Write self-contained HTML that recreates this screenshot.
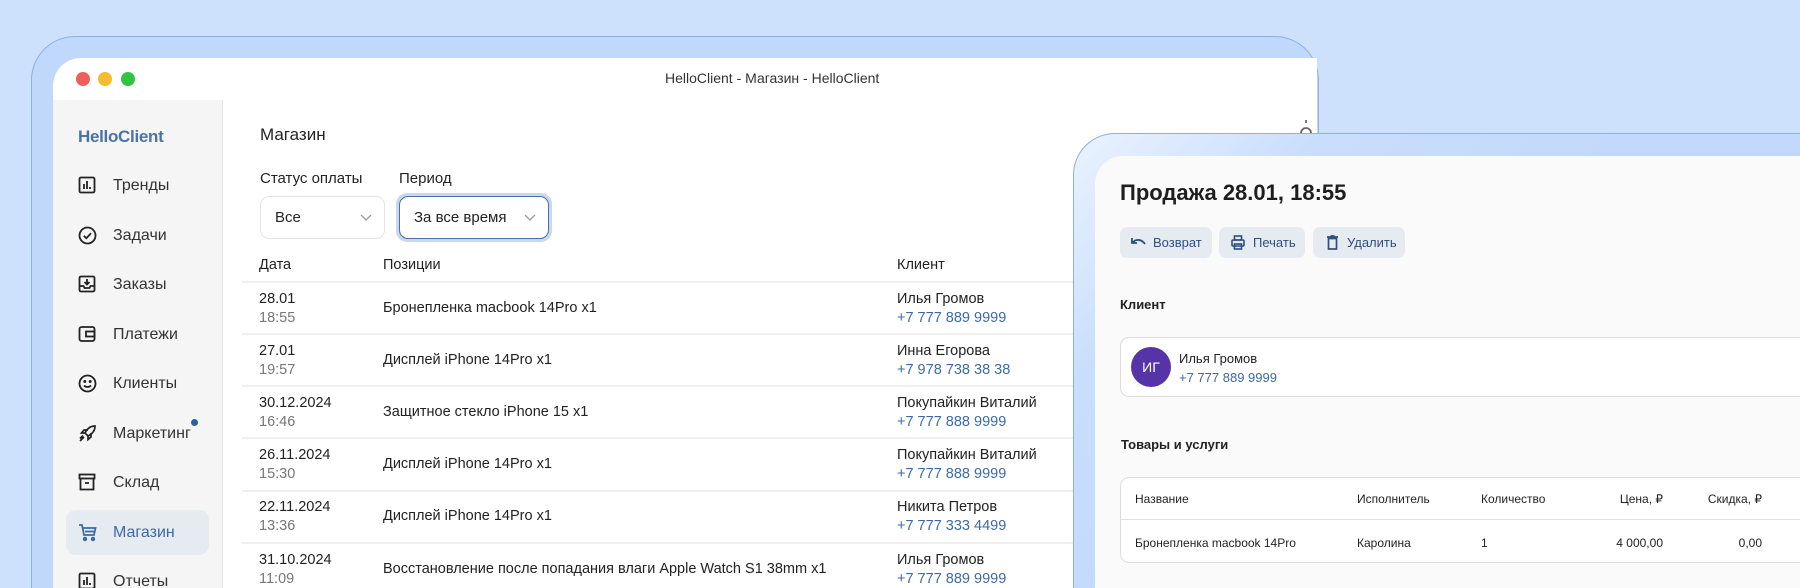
<!DOCTYPE html>
<html><head><meta charset="utf-8"><style>
*{margin:0;padding:0;box-sizing:border-box}
html,body{width:1800px;height:588px;overflow:hidden}
body{background:#cde1fd;font-family:"Liberation Sans","Noto Sans CJK SC",sans-serif;color:#222}
#root{position:relative;width:1800px;height:588px;overflow:hidden}
.abs{position:absolute}
.frame{left:31px;top:36px;width:1288px;height:700px;border:1.5px solid #8fb0e2;border-radius:44px;background:#c0d8fb}
.win{left:53px;top:58px;width:1264px;height:700px;background:#fff;border-radius:28px 0 0 0;overflow:hidden}
.dot{width:14px;height:14px;border-radius:50%;top:72px}
.side{left:53px;top:100px;width:170px;height:600px;background:#f5f5f5;border-right:1px solid #e6e6e6}
.nav{left:78px;font-size:16px;color:#333;height:20px;line-height:20px}
.nav svg{position:absolute;left:0;top:0}
.nav span{position:absolute;left:35px;top:0;white-space:nowrap}
.t{font-size:14.5px;white-space:nowrap}
.sel{border:1px solid #e4e4e4;border-radius:9px;background:#fff;height:43px;top:196px;font-size:15px;line-height:41px;padding-left:14px}
.line{height:2px;background:#efefef;left:242px;width:840px}
.ph{color:#3d6aa6}
.pframe{left:1073px;top:133px;width:800px;height:600px;border:1.5px solid #8fb0e2;border-radius:42px;background:linear-gradient(135deg,#eaf3ff 0%,#c9defc 18%,#c2d9fb 40%)}
.pin{left:1095px;top:156px;width:800px;height:600px;background:#fafafa;border-radius:28px 0 0 0}
.btn{top:227px;height:31px;background:#e6ebf2;border-radius:7px;font-size:13px;color:#2d4f7e;line-height:31px}
.sm{font-size:12px;white-space:nowrap}
</style></head><body><div id="root">
<div class="abs frame"></div>
<div class="abs win"></div>
<div class="abs dot" style="left:76px;background:#ee5f57"></div>
<div class="abs dot" style="left:98px;background:#f6bb2f"></div>
<div class="abs dot" style="left:121px;background:#2ec640"></div>
<div class="abs" style="left:665px;top:70px;font-size:14px;color:#333">HelloClient - Магазин - HelloClient</div>
<div class="abs side"></div>
<div class="abs" style="left:78px;top:127px;font-size:17px;font-weight:bold;color:#4b72a8;letter-spacing:-0.3px">HelloClient</div>

<div class="abs nav" style="top:176px"><svg width="18" height="18" viewBox="0 0 18 18" fill="none" stroke="#222" stroke-width="1.8"><rect x="1.5" y="1.5" width="15" height="15" rx="1.5"/><path d="M6 13V8M9 13V5M12 13v-2"/></svg><span>Тренды</span></div>
<div class="abs nav" style="top:226px"><svg width="19" height="19" viewBox="0 0 19 19" fill="none" stroke="#222" stroke-width="1.8"><circle cx="9.5" cy="9.5" r="8"/><path d="M5.8 9.7l2.5 2.5 4.8-5"/></svg><span>Задачи</span></div>
<div class="abs nav" style="top:275px"><svg width="18" height="18" viewBox="0 0 18 18" fill="none" stroke="#222" stroke-width="1.8"><rect x="1.5" y="1.5" width="15" height="15" rx="1.5"/><path d="M1.5 11h4l1 2h5l1-2h4M9 4v5M6.5 7L9 9.5 11.5 7"/></svg><span>Заказы</span></div>
<div class="abs nav" style="top:325px"><svg width="18" height="18" viewBox="0 0 18 18" fill="none" stroke="#222" stroke-width="1.8"><rect x="1.5" y="2" width="15" height="14" rx="2"/><rect x="8" y="6.5" width="8.5" height="5"/></svg><span>Платежи</span></div>
<div class="abs nav" style="top:374px"><svg width="19" height="19" viewBox="0 0 19 19" fill="none" stroke="#222" stroke-width="1.8"><circle cx="9.5" cy="9.5" r="8"/><path d="M6 11.5c1.8 2 5.2 2 7 0"/><circle cx="6.8" cy="7.5" r=".6" fill="#222"/><circle cx="12.2" cy="7.5" r=".6" fill="#222"/></svg><span>Клиенты</span></div>
<div class="abs nav" style="top:424px"><svg width="19" height="19" viewBox="0 0 19 19" fill="none" stroke="#222" stroke-width="1.7"><path d="M17 2c-5 0-8 3-10 7l3 3c4-2 7-5 7-10zM7 9H3.5L6 6h4M10 12v3.5l3-2.5V9M6 13l-4 4M5 11.5L2 14.5"/></svg><span>Маркетинг</span></div>
<div class="abs" style="left:191px;top:419px;width:7px;height:7px;border-radius:50%;background:#2d5fa0"></div>
<div class="abs nav" style="top:473px"><svg width="18" height="18" viewBox="0 0 18 18" fill="none" stroke="#222" stroke-width="1.8"><rect x="1.5" y="1.5" width="15" height="4"/><path d="M2.5 5.5v11h13v-11M7 10h4"/></svg><span>Склад</span></div>
<div class="abs" style="left:66px;top:510px;width:143px;height:45px;border-radius:10px;background:#e6ebf2"></div>
<div class="abs nav" style="top:523px;color:#3d6aa6"><svg width="19" height="19" viewBox="0 0 19 19" fill="none" stroke="#3d6aa6" stroke-width="1.8"><path d="M1 2h3l2 10h10l1.5-7H5M7 8.5h9"/><circle cx="7" cy="16" r="1.3" fill="#3d6aa6"/><circle cx="15" cy="16" r="1.3" fill="#3d6aa6"/></svg><span>Магазин</span></div>
<div class="abs nav" style="top:572px"><svg width="18" height="18" viewBox="0 0 18 18" fill="none" stroke="#222" stroke-width="1.8"><rect x="1.5" y="1.5" width="15" height="15" rx="1.5"/><path d="M6 13V8M9 13V5M12 13v-2"/></svg><span>Отчеты</span></div>

<div class="abs" style="left:260px;top:125px;font-size:17px;color:#222">Магазин</div>
<div class="abs t" style="left:260px;top:170px;font-size:15px">Статус оплаты</div>
<div class="abs t" style="left:399px;top:170px;font-size:15px">Период</div>
<div class="abs sel" style="left:260px;width:125px">Все<svg class="abs" style="right:12px;top:17px" width="12" height="8" viewBox="0 0 12 8" fill="none" stroke="#999" stroke-width="1.3"><path d="M1 1l5 5 5-5"/></svg></div>
<div class="abs" style="left:396px;top:193px;width:156px;height:49px;border-radius:11px;background:#c9d8ea"></div>
<div class="abs sel" style="left:399px;width:150px;border:1.5px solid #4a6fa5">За все время<svg class="abs" style="right:12px;top:17px" width="12" height="8" viewBox="0 0 12 8" fill="none" stroke="#999" stroke-width="1.3"><path d="M1 1l5 5 5-5"/></svg></div>

<div class="abs t" style="left:259px;top:257px">Дата</div>
<div class="abs t" style="left:383px;top:257px">Позиции</div>
<div class="abs t" style="left:897px;top:257px">Клиент</div>
<div class="abs line" style="top:281px"></div>
<div class="abs line" style="top:333px"></div>
<div class="abs line" style="top:385px"></div>
<div class="abs line" style="top:437px"></div>
<div class="abs line" style="top:490px"></div>
<div class="abs line" style="top:542px"></div>

<div class="abs t" style="left:259px;top:290px;line-height:19px">28.01<br><span style="color:#777">18:55</span></div>
<div class="abs t" style="left:383px;top:300px">Бронепленка macbook 14Pro x1</div>
<div class="abs t" style="left:897px;top:290px;line-height:19px">Илья Громов<br><span class="ph">+7 777 889 9999</span></div>

<div class="abs t" style="left:259px;top:342px;line-height:19px">27.01<br><span style="color:#777">19:57</span></div>
<div class="abs t" style="left:383px;top:352px">Дисплей iPhone 14Pro x1</div>
<div class="abs t" style="left:897px;top:342px;line-height:19px">Инна Егорова<br><span class="ph">+7 978 738 38 38</span></div>

<div class="abs t" style="left:259px;top:394px;line-height:19px">30.12.2024<br><span style="color:#777">16:46</span></div>
<div class="abs t" style="left:383px;top:404px">Защитное стекло iPhone 15 x1</div>
<div class="abs t" style="left:897px;top:394px;line-height:19px">Покупайкин Виталий<br><span class="ph">+7 777 888 9999</span></div>

<div class="abs t" style="left:259px;top:446px;line-height:19px">26.11.2024<br><span style="color:#777">15:30</span></div>
<div class="abs t" style="left:383px;top:456px">Дисплей iPhone 14Pro x1</div>
<div class="abs t" style="left:897px;top:446px;line-height:19px">Покупайкин Виталий<br><span class="ph">+7 777 888 9999</span></div>

<div class="abs t" style="left:259px;top:498px;line-height:19px">22.11.2024<br><span style="color:#777">13:36</span></div>
<div class="abs t" style="left:383px;top:508px">Дисплей iPhone 14Pro x1</div>
<div class="abs t" style="left:897px;top:498px;line-height:19px">Никита Петров<br><span class="ph">+7 777 333 4499</span></div>

<div class="abs t" style="left:259px;top:551px;line-height:19px">31.10.2024<br><span style="color:#777">11:09</span></div>
<div class="abs t" style="left:383px;top:561px">Восстановление после попадания влаги Apple Watch S1 38mm x1</div>
<div class="abs t" style="left:897px;top:551px;line-height:19px">Илья Громов<br><span class="ph">+7 777 889 9999</span></div>

<svg class="abs" style="left:1299px;top:119px" width="14" height="16" viewBox="0 0 14 16" fill="none" stroke="#666" stroke-width="1.8"><path d="M7 1v3M2 14a5 5 0 0 1 10 0"/></svg>

<div class="abs pframe"></div>
<div class="abs pin"></div>
<div class="abs" style="left:1120px;top:180px;font-size:22px;font-weight:bold;color:#1e1e1e">Продажа 28.01, 18:55</div>
<div class="abs btn" style="left:1120px;width:92px;padding-left:33px">Возврат<svg class="abs" style="left:11px;top:9px" width="15" height="13" viewBox="0 0 15 13" fill="none" stroke="#2d4f7e" stroke-width="1.8"><path d="M1 2v5h5M1.5 7C4 3 10 2.5 14 8"/></svg></div>
<div class="abs btn" style="left:1219px;width:86px;padding-left:34px">Печать<svg class="abs" style="left:12px;top:8px" width="14" height="15" viewBox="0 0 14 15" fill="none" stroke="#2d4f7e" stroke-width="1.6"><rect x="3.5" y="1" width="7" height="4"/><rect x="1" y="5" width="12" height="6" rx="1"/><rect x="3.5" y="9" width="7" height="5"/></svg></div>
<div class="abs btn" style="left:1313px;width:92px;padding-left:34px">Удалить<svg class="abs" style="left:14px;top:8px" width="11" height="15" viewBox="0 0 11 15" fill="none" stroke="#2d4f7e" stroke-width="1.7"><path d="M0 2h11M3.5 1h4"/><rect x="1.5" y="3.5" width="8" height="10.5"/></svg></div>
<div class="abs" style="left:1120px;top:297px;font-size:13px;font-weight:bold;color:#222">Клиент</div>
<div class="abs" style="left:1120px;top:337px;width:700px;height:60px;border:1px solid #ddd;border-radius:9px;background:#fff"></div>
<div class="abs" style="left:1131px;top:347px;width:40px;height:40px;border-radius:50%;background:#5633a6;color:#fff;font-size:14px;line-height:40px;text-align:center">ИГ</div>
<div class="abs" style="left:1179px;top:349px;font-size:13px;line-height:19px">Илья Громов<br><span class="ph">+7 777 889 9999</span></div>
<div class="abs" style="left:1121px;top:437px;font-size:13px;font-weight:bold;color:#222">Товары и услуги</div>
<div class="abs" style="left:1120px;top:477px;width:700px;height:86px;border:1px solid #ddd;border-radius:9px;background:#fff"></div>
<div class="abs" style="left:1121px;top:519px;width:700px;height:1px;background:#e2e2e2"></div>
<div class="abs sm" style="left:1135px;top:492px">Название</div>
<div class="abs sm" style="left:1357px;top:492px">Исполнитель</div>
<div class="abs sm" style="left:1481px;top:492px">Количество</div>
<div class="abs sm" style="left:1563px;top:492px;width:100px;text-align:right">Цена, ₽</div>
<div class="abs sm" style="left:1662px;top:492px;width:100px;text-align:right">Скидка, ₽</div>
<div class="abs sm" style="left:1135px;top:536px">Бронепленка macbook 14Pro</div>
<div class="abs sm" style="left:1357px;top:536px">Каролина</div>
<div class="abs sm" style="left:1481px;top:536px">1</div>
<div class="abs sm" style="left:1563px;top:536px;width:100px;text-align:right">4 000,00</div>
<div class="abs sm" style="left:1662px;top:536px;width:100px;text-align:right">0,00</div>
</div></body></html>
